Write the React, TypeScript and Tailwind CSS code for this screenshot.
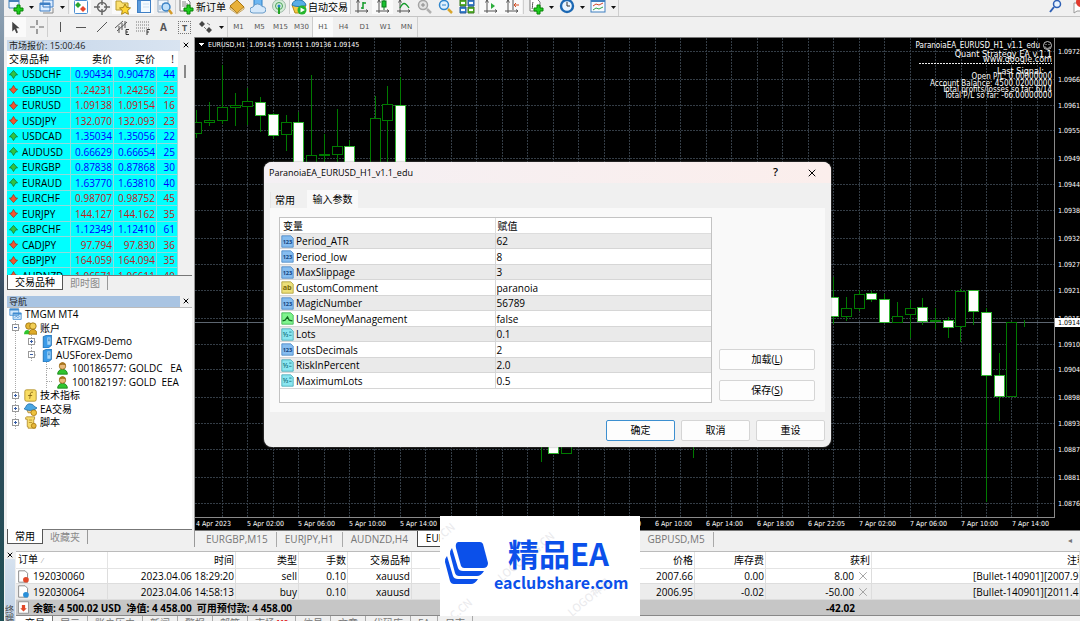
import type { ReactNode } from "react";
import clsx from "clsx";
import { X } from "lucide-react";

const quotes = [
  { symbol: "USDCHF", bid: "0.90434", ask: "0.90478", spread: 44, up: true },
  { symbol: "GBPUSD", bid: "1.24231", ask: "1.24256", spread: 25, up: false },
  { symbol: "EURUSD", bid: "1.09138", ask: "1.09154", spread: 16, up: false },
  { symbol: "USDJPY", bid: "132.070", ask: "132.093", spread: 23, up: false },
  { symbol: "USDCAD", bid: "1.35034", ask: "1.35056", spread: 22, up: true },
  { symbol: "AUDUSD", bid: "0.66629", ask: "0.66654", spread: 25, up: true },
  { symbol: "EURGBP", bid: "0.87838", ask: "0.87868", spread: 30, up: true },
  { symbol: "EURAUD", bid: "1.63770", ask: "1.63810", spread: 40, up: true },
  { symbol: "EURCHF", bid: "0.98707", ask: "0.98752", spread: 45, up: false },
  { symbol: "EURJPY", bid: "144.127", ask: "144.162", spread: 35, up: false },
  { symbol: "GBPCHF", bid: "1.12349", ask: "1.12410", spread: 61, up: true },
  { symbol: "CADJPY", bid: "97.794", ask: "97.830", spread: 36, up: false },
  { symbol: "GBPJPY", bid: "164.059", ask: "164.094", spread: 35, up: false },
  { symbol: "AUDNZD", bid: "1.06571", ask: "1.06611", spread: 40, up: false },
];

const params = [
  { name: "Period_ATR", value: "62", type: "int" },
  { name: "Period_low", value: "8", type: "int" },
  { name: "MaxSlippage", value: "3", type: "int" },
  { name: "CustomComment", value: "paranoia", type: "string" },
  { name: "MagicNumber", value: "56789", type: "int" },
  { name: "UseMoneyManagement", value: "false", type: "bool" },
  { name: "Lots", value: "0.1", type: "double" },
  { name: "LotsDecimals", value: "2", type: "int" },
  { name: "RiskInPercent", value: "2.0", type: "double" },
  { name: "MaximumLots", value: "0.5", type: "double" },
];

const orders = [
  { id: "192030060", time: "2023.04.06 18:29:20", type: "sell", lots: "0.10", symbol: "xauusd", price: "2007.66", swap: "0.00", profit: "8.00", note: "[Bullet-140901][2007.97]" },
  { id: "192030064", time: "2023.04.06 14:58:13", type: "buy", lots: "0.10", symbol: "xauusd", price: "2006.95", swap: "-0.02", profit: "-50.00", note: "[Bullet-140901][2011.41]" },
];

// x, high, low, body top, body bottom, bearish
const candles: [number, number, number, number, number, boolean][] = [
  [1, 72, 100, 84, 95, false],
  [14, 64, 88, 82, 84, false],
  [27, 27, 86, 69, 82, false],
  [40, 55, 88, 67, 69, false],
  [52, 50, 87, 63, 68, false],
  [65, 59, 94, 64, 77, true],
  [78, 75, 101, 76, 97, true],
  [91, 77, 113, 84, 96, false],
  [103, 74, 130, 84, 132, true],
  [116, 37, 130, 117, 132, false],
  [129, 96, 130, 116, 117, false],
  [142, 71, 132, 108, 116, false],
  [154, 102, 130, 108, 132, true],
  [180, 58, 130, 80, 132, false],
  [192, 48, 132, 66, 82, false],
  [205, 39, 130, 67, 132, true],
  [346, 400, 424, 400, 402, false],
  [358, 400, 415, 400, 415, true],
  [371, 400, 415, 400, 415, false],
  [498, 400, 420, 400, 402, false],
  [638, 239, 286, 259, 278, true],
  [651, 259, 283, 270, 278, false],
  [664, 252, 273, 256, 270, false],
  [676, 253, 264, 255, 261, true],
  [689, 256, 285, 261, 284, true],
  [702, 264, 285, 278, 284, false],
  [715, 262, 300, 270, 276, false],
  [727, 260, 287, 269, 283, true],
  [740, 270, 291, 282, 283, false],
  [753, 279, 300, 282, 289, true],
  [765, 251, 304, 253, 288, false],
  [778, 252, 287, 252, 273, true],
  [791, 270, 464, 274, 337, true],
  [804, 315, 383, 337, 358, true],
  [816, 284, 358, 284, 358, false],
  [829, 282, 289, 284, 284, false],
];

const prices: [string, number][] = [
  ["1.0972", 13], ["1.0966", 41], ["1.0961", 67], ["1.0955", 92], ["1.0949", 120], ["1.0944", 146],
  ["1.0938", 172], ["1.0932", 200], ["1.0927", 226], ["1.0921", 252], ["1.0915", 280], ["1.0910", 306],
  ["1.0904", 331], ["1.0898", 359], ["1.0893", 385], ["1.0887", 411], ["1.0881", 439], ["1.0876", 465],
];

const times = [
  "4 Apr 2023", "5 Apr 02:00", "5 Apr 06:00", "5 Apr 10:00", "5 Apr 14:00", "5 Apr 18:00", "5 Apr 22:00",
  "6 Apr 02:00", "6 Apr 06:00", "6 Apr 10:00", "6 Apr 14:00", "6 Apr 18:00", "6 Apr 22:05", "7 Apr 02:00",
  "7 Apr 06:00", "7 Apr 10:00", "7 Apr 14:00",
];

const frames = ["M1", "M5", "M15", "M30", "H1", "H4", "D1", "W1", "MN"];
const bottomTabs = ["展示", "账户历史", "新闻", "警报", "邮箱", "市场", "信号", "文章", "代码库", "EA", "日志"];

function Svg({ children, size = 16 }: { children: ReactNode; size?: number }) {
  return (
    <svg width={size} height={size} viewBox="0 0 16 16" fill="none" className="shrink-0">
      {children}
    </svg>
  );
}

function Tool({ label, pressed, children }: { label: string; pressed?: boolean; children: ReactNode }) {
  return (
    <button
      aria-label={label}
      className={clsx("flex w-[21px] shrink-0 items-center justify-center self-stretch", pressed && "bg-[#fafafa]")}
    >
      {children}
    </button>
  );
}

function Caret() {
  return (
    <svg width="10" height="6" viewBox="0 0 10 6" className="shrink-0">
      <path d="M3 2h5L5.500 5z" fill="#111" />
    </svg>
  );
}

function Sep({ spaced }: { spaced?: boolean }) {
  return <div className={clsx("w-px shrink-0 self-stretch bg-[#cfcfcf]", spaced && "mx-px")} />;
}

const plus = <path d="M9 6h3v3h3v3h-3v3H9v-3H6V9h3z" fill="#1fd01f" stroke="#078307" />;
const axes = <path d="M4 1v13M1 12h13M2.500 3.500L4 1l1.500 2.500M12 10.500l2 1.500-2 1.500" stroke="#555" />;

function MainToolbar() {
  return (
    <div className="flex h-[17px] items-center border-b border-[#c4c4c4] pl-px">
      <div className="flex h-full w-[614px] items-center border-r border-[#cfcfcf] pb-[2px]">
        <Tool label="新图表">
          <Svg><path d="M1 0h10v9H1z" fill="#eef6ff" stroke="#4380b8" /><path d="M1 2h10" stroke="#4380b8" strokeWidth="2" />{plus}</Svg>
        </Tool>
        <Caret />
        <Tool label="配置文件">
          <Svg><path d="M4 1h10v7H4zM1 4h10v8H1z" fill="#dcecff" stroke="#3f7fc4" /><path d="M1 5h10" stroke="#3f7fc4" strokeWidth="2" /><path d="M4 14h10V9" stroke="#888" /></Svg>
        </Tool>
        <Caret />
        <Sep spaced />
        <Tool label="市场报价" pressed>
          <Svg><rect x="1.500" y="1.500" width="13" height="13" rx="1" fill="#fff" stroke="#4b8fd2" /><path d="M5 3l3 3-3 3-3-3z" fill="#27a52e" /><path d="M10 7l3 3-3 3-3-3z" fill="#e8472b" /></Svg>
        </Tool>
        <Tool label="数据窗口">
          <Svg><circle cx="8" cy="8" r="4.500" stroke="#666" strokeWidth="1.500" /><path d="M8 0v6M8 10v6M0 8h6M10 8h6" stroke="#666" strokeWidth="1.500" /></Svg>
        </Tool>
        <Tool label="导航" pressed>
          <Svg><path d="M1 2h5l1 2h6v7H1z" fill="#fbe06f" stroke="#b79a2f" /><path d="M10 5l1.700 3.400 3.800.5-2.800 2.600.7 3.800-3.400-1.800-3.400 1.800.7-3.800L4.500 9l3.800-.5z" fill="#ffd633" stroke="#a88414" /></Svg>
        </Tool>
        <Tool label="终端" pressed>
          <Svg><rect x="1.500" y="1.500" width="13" height="12" fill="#f4faff" stroke="#3f7fc4" /><path d="M2 2h3v11H2z" fill="#5b9bdc" /><path d="M7 5h6M7 8h6" stroke="#cfe0f0" /></Svg>
        </Tool>
        <Tool label="策略测试">
          <Svg><path d="M1 1h10v12H1z" fill="#f0f6fc" stroke="#8aa4be" /><path d="M3 11V6M6 11V4" stroke="#8aa4be" /><circle cx="9" cy="8" r="4" fill="#bfe0fa" stroke="#3b82c6" strokeWidth="1.500" /><path d="M12 11l3 4" stroke="#d49b2a" strokeWidth="2.500" /></Svg>
        </Tool>
        <Sep />
        <button className="flex w-[50px] shrink-0 items-center text-[10px]/[14px] whitespace-nowrap">
          <span className="flex w-[21px] justify-center">
            <Svg><path d="M2 0h7l3 3v9H2z" fill="#fff" stroke="#777" /><path d="M4 3h4M4 5h6M4 7h5" stroke="#888" />{plus}</Svg>
          </span>
          新订单
        </button>
        <Tool label="MetaEditor">
          <Svg><path d="M1 7l7-6 7 7-7 6z" fill="#e8b13a" stroke="#a8740f" /><path d="M1 8l7 6 7-6v2l-7 5-7-5z" fill="#fff3cf" stroke="#a8740f" strokeWidth=".6" /></Svg>
        </Tool>
        <Tool label="社区">
          <Svg><path d="M4 0h8v8H4z" fill="#6cb7f2" stroke="#2d7ec4" /><path d="M3 14a3 3 0 010-6 5 5 0 019-.5A3 3 0 0113 14z" fill="#d5e9fb" stroke="#6a9cc8" /></Svg>
        </Tool>
        <Tool label="信号">
          <Svg><circle cx="8" cy="7" r="6.500" fill="#d6eed9" stroke="#9cb8a6" /><circle cx="8" cy="7" r="3.500" stroke="#49a25a" /><path d="M8 7v8" stroke="#24a324" strokeWidth="2" /><circle cx="8" cy="7" r="1.500" fill="#2785c9" /></Svg>
        </Tool>
        <Sep />
        <button className="flex w-[60px] shrink-0 items-center self-stretch bg-[#fafafa] text-[10px]/[14px] whitespace-nowrap">
          <span className="flex w-[18px] justify-center">
            <Svg><path d="M1 6h14l-3 8H4z" fill="#f4c944" stroke="#b78a1a" /><path d="M1 6c1-7 12-7 14 0-3 2-11 2-14 0z" fill="#59aee6" stroke="#2577b0" /><circle cx="11" cy="11" r="4.500" fill="#25b52d" /><path d="M9.500 8.500L14 11l-4.500 2.500z" fill="#fff" /></Svg>
          </span>
          自动交易
        </button>
        <Sep />
        <Tool label="柱状图"><Svg>{axes}<path d="M9 3v7M9 4h3M7 9h2" stroke="#139a2a" strokeWidth="1.500" /></Svg></Tool>
        <Tool label="阴阳烛" pressed><Svg>{axes}<path d="M9 0v11" stroke="#0b7c1c" /><rect x="7" y="2" width="4" height="6" fill="#17c12f" stroke="#0b7c1c" /></Svg></Tool>
        <Tool label="折线图"><Svg>{axes}<path d="M4 9c3-6 5-6 9 0" stroke="#139a2a" strokeWidth="1.300" /></Svg></Tool>
        <Tool label="放大"><Svg><circle cx="6" cy="6" r="4.500" fill="#e3e3e3" stroke="#a4a4a4" strokeWidth="1.500" /><path d="M4 6h4M6 4v4" stroke="#888" /><path d="M10 10l4 4" stroke="#b0b0b0" strokeWidth="2.500" /></Svg></Tool>
        <Tool label="缩小"><Svg><circle cx="6" cy="6" r="4.500" fill="#dff0fd" stroke="#2f86cc" strokeWidth="1.500" /><path d="M4 6h4" stroke="#2f86cc" /><path d="M10 10l4 4" stroke="#d9a62d" strokeWidth="2.500" /></Svg></Tool>
        <Tool label="平铺窗口"><Svg><path d="M1 1h6v6H1zM9 8h6v6H9z" fill="#5bb531" stroke="#35781b" /><path d="M9 1h6v6H9zM1 8h6v6H1z" fill="#3f83d1" stroke="#205799" /><path d="M2 4h4M10 4h4M2 11h4M10 11h4" stroke="#fff" strokeWidth="2" /></Svg></Tool>
        <Sep spaced />
        <Tool label="自动滚动" pressed><Svg>{axes}<path d="M8 4l4 3-4 3z" fill="#2cae3c" /></Svg></Tool>
        <Tool label="图表平移" pressed><Svg>{axes}<path d="M9 1v10" stroke="#555" /><path d="M15 6h-5M12 4l-2 2 2 2" stroke="#d44a1d" /></Svg></Tool>
        <Sep spaced />
        <Tool label="技术指标"><Svg><path d="M2 0h7l3 3v9H2z" fill="#fff" stroke="#777" /><path d="M5 3c-1 2 0 5-1 7" stroke="#555" />{plus}</Svg></Tool>
        <Caret />
        <Tool label="周期"><Svg><circle cx="8" cy="7" r="6" fill="#eaf5ff" stroke="#1c68b3" strokeWidth="2.400" /><path d="M8 3v4h3" stroke="#333" /></Svg></Tool>
        <Caret />
        <Tool label="模板"><Svg><rect x="1" y="1" width="14" height="12" fill="#f7fbff" stroke="#3e7fbf" /><path d="M1 2h14" stroke="#3e7fbf" strokeWidth="2" /><path d="M3 7l3-2 3 1 4-2" stroke="#d2452b" /><path d="M3 11l3-2 3 1 4-2" stroke="#2fa244" /></Svg></Tool>
        <Caret />
      </div>
      <div className="ml-auto flex items-center gap-2 overflow-hidden pb-[3px]">
        <Svg><circle cx="9" cy="5" r="3.500" fill="#e8f3ff" stroke="#2d5fb4" strokeWidth="1.500" /><path d="M6 8l-4 5" stroke="#2d5fb4" strokeWidth="2" /></Svg>
        <div className="w-2 overflow-hidden">
          <Svg><path d="M2 4h10v8H5l-3 2z" fill="#fff" stroke="#999" /><circle cx="9" cy="3" r="5" fill="#e23a2e" /></Svg>
        </div>
      </div>
    </div>
  );
}

function LineToolbar() {
  return (
    <div className="flex h-5 items-center pl-px text-[#555]">
      <Tool label="光标" pressed><Svg size={13}><path d="M4 1v12l3-3 2 5 2-1-2-5h4z" fill="#444" /></Svg></Tool>
      <Tool label="十字准线"><Svg><path d="M8 1v5M8 10v5M1 8h5M10 8h5" stroke="#666" strokeWidth="1.200" /></Svg></Tool>
      <Sep />
      <Tool label="垂直线"><Svg><path d="M9.500 3v10" stroke="#555" /></Svg></Tool>
      <Tool label="水平线"><Svg><path d="M4 8.500h10" stroke="#555" /></Svg></Tool>
      <Tool label="趋势线"><Svg><path d="M4 13L14 3" stroke="#555" /></Svg></Tool>
      <Tool label="等距通道"><Svg><path d="M1 9l8-7M3 12l10-9M5 7v7M8 4v7M11 2v7" stroke="#555" /><path d="M15 10.500h-3v5h3M12 13h2" stroke="#333" /></Svg></Tool>
      <Tool label="斐波纳契"><Svg><path d="M1 3h13M1 6h13M1 9h13M1 12h9" stroke="#777" strokeDasharray="1 1" /><path d="M15 10.500h-3V16M12 13h2" stroke="#333" /></Svg></Tool>
      <Tool label="文字"><span className="text-[10px] font-bold">A</span></Tool>
      <Tool label="文字标签"><span className="border border-dotted border-[#777] px-[3px] text-[9px]/[11px] font-bold">T</span></Tool>
      <Tool label="箭头"><Svg><path d="M4 2l3 3-3 3-3-3zM11 8l3 3-3 3-3-3z" fill="#444" /><path d="M6 8l2 2M9 4l3 2" stroke="#777" /></Svg></Tool>
      <Caret />
      <div className="ml-px flex self-stretch border-x border-[#cfcfcf] font-['DejaVu_Sans',sans-serif] text-[7px]">
        {frames.map((f) => (
          <button key={f} className={clsx("w-[21px]", f === "H1" && "border-l border-[#ccc] bg-[#fafafa]")}>{f}</button>
        ))}
      </div>
    </div>
  );
}

function PanelTitle({ title, strong }: { title: string; strong?: boolean }) {
  return (
    <div className="flex h-3 items-center">
      <h2
        className={clsx(
          "h-[11px] flex-1 pl-[2px] text-[9px]/[11px] text-[#222]",
          strong ? "bg-[#a9c4e2]" : "bg-linear-to-r from-[#c5d6e9] to-[#d9e4f1]"
        )}
      >
        {title}
      </h2>
      <button aria-label="关闭" className="flex w-3 justify-center"><X size={8} strokeWidth={3} /></button>
    </div>
  );
}

function TabStrip({ tabs }: { tabs: string[] }) {
  return (
    <div className="flex h-4 items-start border-t border-[#777] text-[10px]/[14px]">
      <button className="-mt-px h-full border border-t-0 border-[#555] bg-white px-[7px]">{tabs[0]}</button>
      <button className="border-r border-[#999] px-[7px] text-[#8a8a8a]">{tabs[1]}</button>
    </div>
  );
}

function MarketWatch() {
  return (
    <section>
      <PanelTitle title="市场报价: 15:00:46" />
      <div className="flex h-[224px] overflow-hidden">
        <div className="w-[171px] overflow-hidden">
          <table className="w-full table-fixed border-separate border-spacing-0 text-right text-[10px]/[14px]">
            <thead className="bg-white">
              <tr className="h-4">
                <th className="w-[64px] pl-[2px] text-left font-normal">交易品种</th>
                <th className="w-[43px] pr-[2px] font-normal">卖价</th>
                <th className="w-[43px] pr-[2px] font-normal">买价</th>
                <th className="pr-1 font-normal">!</th>
              </tr>
            </thead>
            <tbody className="bg-[#00ffff]">
              {quotes.map((q) => (
                <tr
                  key={q.symbol}
                  className={clsx("h-[15px] even:h-4 [&>td]:border-b [&>td]:border-r [&>td]:border-[#8ddcdc]", q.up ? "text-[#0000ff]" : "text-[#c02020]")}
                >
                  <td className="text-left text-black">
                    <span className="flex items-center gap-1 pl-[2px]">
                      <svg width="9" height="9" viewBox="0 0 10 10">
                        {q.up
                          ? <path d="M5 .5L9.500 5.500H7.500L5 9.500 2.500 5.500H.5z" fill="#2fc344" stroke="#14702a" strokeWidth=".8" />
                          : <path d="M5 9.500L.5 4.500H2.500L5 .5l2.500 4h2z" fill="#f2552f" stroke="#9c2f16" strokeWidth=".8" />}
                      </svg>
                      {q.symbol}
                    </span>
                  </td>
                  <td className="pr-px">{q.bid}</td>
                  <td className="pr-px">{q.ask}</td>
                  <td className="pr-[2px]">{q.spread}</td>
                </tr>
              ))}
            </tbody>
          </table>
        </div>
        <div className="flex flex-1 justify-center pt-[14px]"><div className="h-[13px] w-[2px] bg-[#888]" /></div>
      </div>
      <TabStrip tabs={["交易品种", "即时图"]} />
    </section>
  );
}

function Expander({ open }: { open?: boolean }) {
  return (
    <svg width="10" height="14" viewBox="0 0 10 14" className="shrink-0">
      <path d="M4.500 0v14M8 7h4" stroke="#aaa" strokeDasharray="1 1" />
      <rect x="1.500" y="3.500" width="6" height="6" fill="#fff" stroke="#999" />
      <path d={open ? "M3 6.500h3" : "M3 6.500h3M4.500 5v3"} stroke="#345ba5" />
    </svg>
  );
}

const serverIcon = <Svg size={13}><path d="M4 2l5-2h5v13l-4 3H4z" fill="#3b9be8" stroke="#1767aa" /><path d="M9 3h4v9H9z" fill="#a7d7fa" /><path d="M10 5h2M10 7h2" stroke="#1767aa" /></Svg>;
const userIcon = <Svg size={13}><path d="M2 15c0-8 12-8 12 0z" fill="#2fc52f" stroke="#178017" /><circle cx="8" cy="5" r="4" fill="#e8b878" stroke="#9a6b1e" /><path d="M4 4c0-5 8-5 8 0-2-1-5-1-8 0z" fill="#a8741d" /></Svg>;
const scriptIcon = <Svg size={13}><path d="M3 1h10v3h-1v8h2v3H5v-2H4V4H2V2z" fill="#f7dc6b" stroke="#b0892a" /><path d="M6 5h4M6 8h4" stroke="#b0892a" /><circle cx="12" cy="12" r="3" fill="#e4b63a" stroke="#a8770e" /></Svg>;

function TreeRow({ depth = 1, open, icon, label }: { depth?: number; open?: boolean; icon: ReactNode; label: string }) {
  return (
    <li className={clsx("flex h-[13px] items-center gap-[3px] whitespace-pre even:h-[14px]", depth === 0 ? "pl-[2px]" : "pl-[4px]")}>
      {depth > 1 && (
        <svg width="13" height="14" className="shrink-0"><path d="M4.500 0v14" stroke="#aaa" strokeDasharray="1 1" /></svg>
      )}
      {depth > 2 && (
        <svg width="26" height="14" className="shrink-0"><path d="M19.500 0v14M20 6.500h6" fill="none" stroke="#aaa" strokeDasharray="1 1" /></svg>
      )}
      {open !== undefined && <Expander open={open} />}
      {icon}
      {label}
    </li>
  );
}

function Navigator() {
  return (
    <section className="mt-1 flex min-h-0 flex-1 flex-col">
      <PanelTitle title="导航" strong />
      <ul className="min-h-0 flex-1 overflow-hidden border-t border-[#bbb] bg-white text-[10px]/[13px]">
        <TreeRow depth={0} label="TMGM MT4" icon={<Svg size={13}><path d="M1 1h11v8H1zM5 6h10v8H5z" fill="#d3e8fb" stroke="#3f8bd0" /><path d="M1 2h11M5 7h10" stroke="#3f8bd0" strokeWidth="2" /><path d="M7 12l2-2 2 2 2-2" stroke="#3f8bd0" /></Svg>} />
        <TreeRow open label="账户" icon={<Svg size={13}><circle cx="6" cy="5" r="4" fill="#e5b634" stroke="#98700f" /><circle cx="11" cy="5" r="4" fill="#f2cf57" stroke="#98700f" /><path d="M0 15c0-7 8-7 8 0z" fill="#2fc52f" /><path d="M6 15c0-8 10-8 10 0z" fill="#dfab28" stroke="#98700f" /></Svg>} />
        <TreeRow depth={2} open={false} label="ATFXGM9-Demo" icon={serverIcon} />
        <TreeRow depth={2} open label="AUSForex-Demo" icon={serverIcon} />
        <TreeRow depth={3} label="100186577: GOLDC   EA" icon={userIcon} />
        <TreeRow depth={3} label="100182197: GOLD  EEA" icon={userIcon} />
        <TreeRow open={false} label="技术指标" icon={<Svg size={13}><rect x="1" y="1" width="14" height="14" rx="2" fill="#f8dc62" stroke="#ad8a23" /><path d="M11 4c-4-1-3 3-4 8M5 8h5" stroke="#7c5b0c" /></Svg>} />
        <TreeRow open={false} label="EA交易" icon={<Svg size={13}><path d="M3 6h9v6H5z" fill="#f0c98e" stroke="#ad8a23" /><path d="M0 7c3-1 2-6 7-6s5 4 9 5c-4 4-12 4-16 1z" fill="#4aa6e2" stroke="#216ea6" /><circle cx="12" cy="12" r="3.500" fill="#eec23e" stroke="#a8770e" /></Svg>} />
        <TreeRow open={false} label="脚本" icon={scriptIcon} />
      </ul>
      <TabStrip tabs={["常用", "收藏夹"]} />
    </section>
  );
}

function Chart() {
  const notes: [string, number, number][] = [
    ["ParanoiaEA_EURUSD_H1_v1.1_edu", 10, 8],
    ["Quant Strategy EA v.1.1", 19, 9],
    ["www.google.com", 24, 9],
    ["Last Signal:  -", 36, 9],
    ["Open P/L: 0.00000000", 41, 8],
    ["Account Balance: 4500.02000000", 48, 8],
    ["Total profits/losses so far: 6/14", 54, 8],
    ["Total P/L so far: -66.00000000", 60, 8],
  ];

  return (
    <svg className="block min-h-0 w-full flex-1 bg-black font-['DejaVu_Sans_Condensed',sans-serif]" shapeRendering="crispEdges" fontSize="7">
      <g stroke="#343d46" strokeDasharray="2 1">
        {prices.map(([, y]) => <path key={y} d={`M0 ${y + 0.5}H859`} />)}
        {Array.from({ length: 33 }, (_, i) => Math.round(26.6 + i * 25.48) + 0.5).map((x) => (
          <path key={x} d={`M${x} 0V479`} />
        ))}
      </g>
      <path d="M0 284.500H859" stroke="#5d6670" />
      {candles.map(([x, high, low, top, bottom, bearish]) => (
        <g key={x} stroke={bearish ? "#2fb52f" : "#007a00"}>
          <path d={`M${x + 0.5} ${high}V${low}`} stroke="#007a00" />
          <rect x={x - 4.5} y={top + 0.5} width="10" height={bottom - top} fill={bearish ? "#fff" : "#000"} />
        </g>
      ))}
      <path d="M859.500 0V479.500H0" fill="none" stroke="#8a8a8a" />
      <g fill="#fff">
        {prices.map(([p, y]) => <text key={p} x="863" y={y + 3}>{p}</text>)}
        {times.map((t, i) => <text key={t} x={1 + i * 51} y="488">{t}</text>)}
        <path d="M3 5h6l-3 3z" />
        <text x="13" y="9" xmlSpace="preserve">EURUSD,H1  1.09145 1.09151 1.09136 1.09145</text>
        {notes.map(([t, y, size], i) => (
          <text key={t} x={i ? 857 : 845} y={y} fontSize={size} textAnchor="end" xmlSpace="preserve">{t}</text>
        ))}
      </g>
      <path d="M724 25.500H857" stroke="#eee" strokeDasharray="2 1" />
      <g fill="none" stroke="#eee" strokeWidth=".8" shapeRendering="auto">
        <circle cx="852.500" cy="7.500" r="4" />
        <path d="M850 8.500c1 2.500 4 2.500 5 0M851 6v1M854 6v1" />
      </g>
      <rect x="860" y="280" width="40" height="9" fill="#fff" />
      <text x="863" y="287" fill="#000">1.0914</text>
    </svg>
  );
}

function ChartTabs() {
  return (
    <div className="flex h-[17px] items-center overflow-hidden border-t border-[#777] pl-[3px] text-[10px]/[15px] text-[#777]">
      <button className="border-r border-[#aaa] px-2">EURGBP,M15</button>
      <button className="border-r border-[#aaa] px-2">EURJPY,H1</button>
      <button className="pr-[9px] pl-2">AUDNZD,H4</button>
      <button className="self-stretch border border-t-0 border-[#444] bg-white px-2 text-black">EURUSD,H1</button>
      <div className="w-[150px] self-stretch border-r border-[#aaa]" />
      <button className="border-r border-[#aaa] px-2">GBPUSD,M5</button>
      <button aria-label="向左滚动" className="mr-2 ml-auto text-[8px]">◂</button>
    </div>
  );
}

const typeIcons: Record<string, ReactNode> = {
  int: <><path d="M1 1h11l3 3v11H1z" fill="#86bdf0" stroke="#4a86c4" /><text x="2" y="11" fontSize="7" fontWeight="bold" fill="#14457e">123</text></>,
  string: <><path d="M1 1h11l3 3v11H1z" fill="#ece07a" stroke="#ab9c35" /><text x="2" y="11" fontSize="9" fontWeight="bold" fill="#7a6a0c">ab</text></>,
  bool: <><path d="M1 1h11l3 3v11H1z" fill="#7ff58e" stroke="#3cb04d" /><path d="M2 11l3-1 3-4 2 4 4 1" stroke="#116b20" strokeWidth="1.500" /></>,
  double: <><path d="M1 1h11l3 3v11H1z" fill="#8be6f0" stroke="#45a8b5" /><text x="2" y="11" fontSize="8" fontWeight="bold" fill="#1c7583">½</text><path d="M10 5h3M10 9h3" stroke="#1c7583" /></>,
};

function ParamsDialog() {
  const button = "h-[21px] rounded-xs border bg-[#fdfdfd] text-[10px]";
  return (
    <div role="dialog" aria-labelledby="dialog-title" className="absolute top-[162px] left-[264px] w-[567px] overflow-hidden rounded-lg bg-[#f0f0f0] pb-[6px] shadow-[0_0_2px_#888]">
      <div className="flex h-[21px] items-center bg-linear-to-r from-[#f4f0f4] to-[#fbeeec] pr-[13px] pl-[5px]">
        <h1 id="dialog-title" className="flex-1 text-[9px]">ParanoiaEA_EURUSD_H1_v1.1_edu</h1>
        <button aria-label="帮助" className="mr-[28px] text-[11px] font-semibold">?</button>
        <button aria-label="关闭"><X size={12} strokeWidth={2} /></button>
      </div>
      <div className="mx-[6px] mt-[7px] flex items-end text-[10px]/[16px]">
        <button className="h-4 w-[37px] border-l border-[#e6e6e6] pr-2">常用</button>
        <button className="h-[18px] w-[51px] bg-[#f9f9f9]">输入参数</button>
      </div>
      <div className="mx-[6px] flex gap-[7px] bg-[#f9f9f9] py-[9px] pr-[10px] pl-[9px]">
        <div className="h-[186px] flex-1 border border-[#c3c3c3] bg-white">
          <table className="w-full table-fixed border-separate border-spacing-0 text-left text-[10px]/[14px]">
            <thead>
              <tr className="h-4 [&>th]:border-b [&>th]:border-[#ddd] [&>th]:font-normal">
                <th className="w-1/2 border-r pl-[3px]">变量</th>
                <th className="pl-[2px]">赋值</th>
              </tr>
            </thead>
            <tbody>
              {params.map((p) => (
                <tr key={p.name} className="h-[15px] odd:bg-[#eaeaea] even:h-4 [&>td]:border-b [&>td]:border-[#d6d6d6]">
                  <td className="border-r">
                    <span className="flex h-[14px] items-center gap-[2px] pl-px"><Svg size={13}>{typeIcons[p.type]}</Svg>{p.name}</span>
                  </td>
                  <td className="pl-px">{p.value}</td>
                </tr>
              ))}
            </tbody>
          </table>
        </div>
        <div className="flex w-[96px] flex-col justify-end gap-[10px] pb-[2px]">
          <button className={clsx(button, "border-[#d5d5d5]")}>加载(<u>L</u>)</button>
          <button className={clsx(button, "border-[#d5d5d5]")}>保存(<u>S</u>)</button>
        </div>
      </div>
      <div className="flex justify-end gap-[6px] pt-2 pr-[6px]">
        <button className={clsx(button, "w-[69px] border-[#3c8fd0]")}>确定</button>
        <button className={clsx(button, "w-[69px] border-[#d5d5d5]")}>取消</button>
        <button className={clsx(button, "w-[69px] border-[#d5d5d5]")}>重设</button>
      </div>
    </div>
  );
}

function OrderIcon({ sell }: { sell: boolean }) {
  return (
    <Svg size={13}>
      <path d="M2 1h8l3 3v11H2z" fill="#fff" stroke="#777" />
      <circle cx="11" cy="12" r="3.500" fill={sell ? "#e2492a" : "#2a8fd8"} />
    </Svg>
  );
}

function Terminal() {
  return (
    <section className="flex h-[70px] shrink-0 overflow-hidden">
      <div className="flex w-3 shrink-0 flex-col items-center">
        <button aria-label="关闭"><X size={8} strokeWidth={3} /></button>
        <div className="w-[10px] flex-1 overflow-hidden bg-linear-to-b from-[#d6e2ef] to-[#bed0e4] pt-[46px] text-[9px]/[9px] text-[#444]">终端</div>
      </div>
      <div className="min-w-0 flex-1 border-t border-[#bbb]">
        <table className="w-full table-fixed border-separate border-spacing-0 bg-white text-right text-[10px]/[14px] [&_td]:border-[#ddd] [&_th]:border-[#e4e4e4]">
          <thead>
            <tr className="h-4 [&>th]:border-r [&>th]:border-b [&>th]:pr-px [&>th]:font-normal">
              <th className="w-[92px] pl-[2px] text-left">订单<span className="pl-1 text-[7px] text-[#999]">⁄</span></th>
              <th className="w-[128px]">时间</th>
              <th className="w-[63px]">类型</th>
              <th className="w-[49px]">手数</th>
              <th className="w-[64px]">交易品种</th>
              <th className="w-[228px]" />
              <th className="w-[55px]">价格</th>
              <th className="w-[71px]">库存费</th>
              <th className="w-[106px]">获利</th>
              <th className="overflow-hidden pl-[195px] text-left whitespace-nowrap">注释</th>
            </tr>
          </thead>
          <tbody>
            {orders.map((o) => (
              <tr key={o.id} className="h-[15px] even:h-4 even:bg-[#ececec] [&>td]:border-r [&>td]:border-b [&>td]:pr-px">
                <td><span className="flex h-[14px] items-center gap-[3px] pl-px"><OrderIcon sell={o.type === "sell"} />{o.id}</span></td>
                <td>{o.time}</td>
                <td>{o.type}</td>
                <td>{o.lots}</td>
                <td>{o.symbol}</td>
                <td />
                <td>{o.price}</td>
                <td>{o.swap}</td>
                <td>
                  <span className="flex items-center justify-end gap-[2px]">
                    {o.profit}
                    <button aria-label="平仓"><X size={14} strokeWidth={1.5} color="#999" /></button>
                  </span>
                </td>
                <td className="overflow-hidden pl-[101px] text-left whitespace-nowrap">{o.note}</td>
              </tr>
            ))}
            <tr className="h-4 bg-[#c6c6c6] font-bold [&>td]:border-b [&>td]:border-[#888]!">
              <td colSpan={8}>
                <span className="flex h-[14px] items-center gap-[3px] pl-px whitespace-pre">
                  <Svg size={13}><rect x="2" y="1" width="12" height="14" fill="#fff" stroke="#888" /><path d="M8 13l-4-4h2V5h4v4h2z" fill="#e2492a" /></Svg>
                  余额: 4 500.02 USD  净值: 4 458.00  可用预付款: 4 458.00
                </span>
              </td>
              <td className="pr-[17px]">-42.02</td>
              <td />
            </tr>
          </tbody>
        </table>
        <div className="flex text-[10px]/[14px] text-[#777]">
          <button className="border-r border-[#777] bg-white pr-[7px] pl-[9px] text-black">交易</button>
          {bottomTabs.map((t) => (
            <button key={t} className="flex items-start border-r border-[#aaa] px-[7px]">
              {t}
              {t === "市场" && <span className="pl-px text-[7px]/[14px] font-bold text-[#e00000]">118</span>}
            </button>
          ))}
        </div>
      </div>
    </section>
  );
}

function Logo() {
  return (
    <div className="absolute top-[516px] left-[440px] h-[100px] w-[200px] bg-white">
      <svg width="200" height="100" className="font-['Noto_Sans_CJK_SC',sans-serif]">
        <g fill="#e9e9ec" fontSize="11">
          <text transform="translate(2 24) rotate(-40)">.CN</text>
          <text transform="translate(62 66) rotate(-40)">LOGO神器.CN</text>
          <text transform="translate(14 104) rotate(-40)">C.CN</text>
          <text transform="translate(132 101) rotate(-40)">LOGO神器</text>
        </g>
        <g fill="#0b50ea">
          <path d="M18 26h22q2 0 3 2l5 19q0 5-5 5H24q-2 0-3-2l-5-18q-1-5 2-6z" />
          <path d="M12 32l6 20q1 3 5 3h21q-3 5-7 5H19q-3 0-4-3l-5-19q0-4 2-6z" />
          <path d="M7 40l6 20q1 3 5 3h20q-3 5-7 5H14q-3 0-4-3L5 46q0-4 2-6z" />
          <text x="68" y="50" fontSize="31" fontWeight="bold">精品EA</text>
          <text x="54" y="73" fontSize="16" fontWeight="bold">eaclubshare.com</text>
        </g>
      </svg>
    </div>
  );
}

export default function App() {
  return (
    <div className="relative flex h-screen overflow-hidden bg-[#f0f0f0] font-['Open_Sans','Noto_Sans_CJK_SC',sans-serif] text-black">
      <div className="w-1 shrink-0 bg-linear-to-b from-[#8fa3b5] via-[#33485c] to-[#1f4f55]" />
      <div className="flex min-w-0 flex-1 flex-col">
        <MainToolbar />
        <LineToolbar />
        <div className="flex min-h-0 flex-1 pb-1">
          <aside className="flex w-[191px] shrink-0 flex-col border-r border-[#999] pt-[2px] pr-[2px] pb-[2px] pl-[3px]">
            <MarketWatch />
            <Navigator />
          </aside>
          <main className="flex min-w-0 flex-1 flex-col border-t border-[#777]">
            <Chart />
            <ChartTabs />
          </main>
        </div>
        <Terminal />
      </div>
      <ParamsDialog />
      <Logo />
    </div>
  );
}
